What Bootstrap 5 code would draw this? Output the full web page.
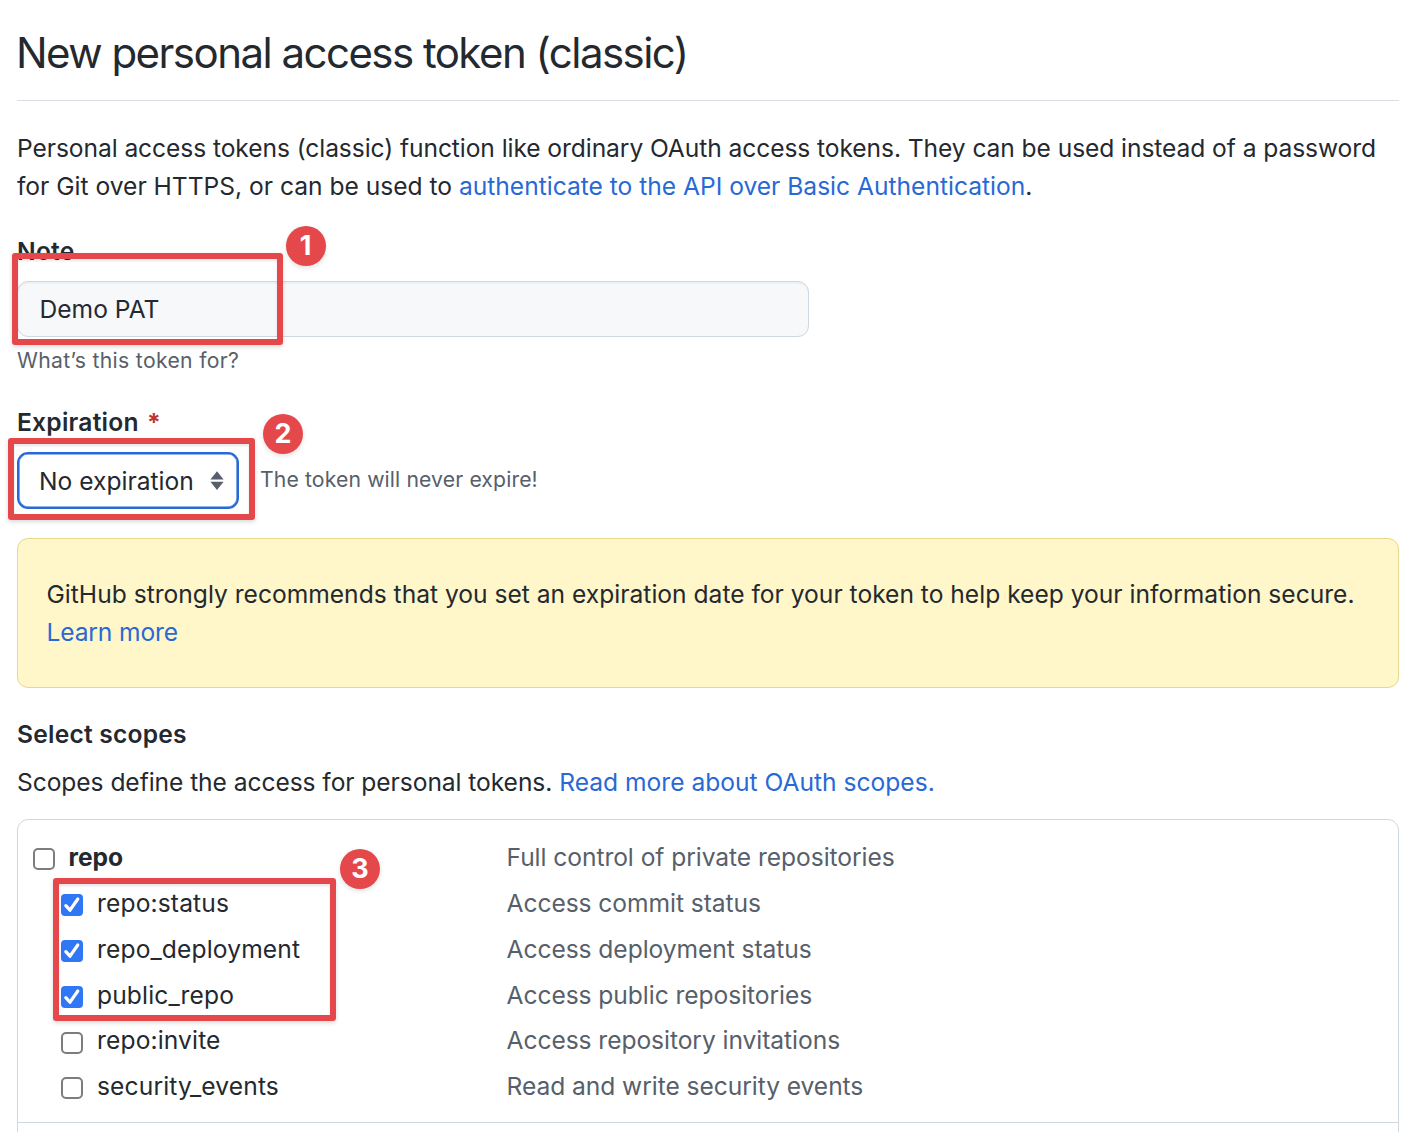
<!DOCTYPE html>
<html lang="en">
<head>
<meta charset="utf-8">
<meta name="viewport" content="width=device-width, initial-scale=1">
<title>New personal access token (classic)</title>
<link href="https://cdn.jsdelivr.net/npm/bootstrap@5.3.0/dist/css/bootstrap.min.css" rel="stylesheet">
<style>
  html, body { height: 1132px; overflow: hidden; }
  body { font-family: Inter, "Liberation Sans", sans-serif; font-size: 24.6px; line-height: 38px; color: #24292f; background: #fff; }
  a { color: #2869d6; text-decoration: none; }
  .page { padding: 21px 17px 0; }
  .page-title { font-size: 42px; line-height: 64px; font-weight: 400; padding-bottom: 15px; border-bottom: 1px solid #d8dee4; margin: 0 0 28px; white-space: nowrap; letter-spacing: -1.53px; text-indent: -1px; }
  .intro { margin-bottom: 27px; white-space: nowrap; }
  .i1 { letter-spacing: -.08px; }
  .i2 { letter-spacing: -.01px; }
  .field-label { font-weight: 600; display: block; letter-spacing: .22px; }
  .note-input { width: 792px; height: 56px; margin-top: 11px; padding: 0 22px 0 21.5px; font-size: inherit; color: #24292f; background: #f6f8fa; border: 1px solid #d0d7de; border-radius: 11px; box-shadow: inset 0 2px 0 rgba(208,215,222,.2); }
  .muted-text { color: #57606a; }
  .hint { font-size: 21.2px; line-height: 32px; }
  .note-hint { margin: 7px 0 27px; letter-spacing: .32px; }
  .expiry-hint { letter-spacing: .12px; margin-bottom: 4px; }
  .required { color: #c0342f; font-weight: 700; margin-left: 2px; }
  .expiry-select { width: 222px; height: 57px; border: 2px solid #2869d6; box-shadow: inset 0 0 0 .6px #2869d6; border-radius: 11px; padding: 0 13px 0 20px; background: #fff; }
  .expiry-row { margin-top: 11px; gap: 21px; }
  .notice { height: 150px; margin: 29px 0 27px; padding: 36px 29px 0 28.5px; border: 1px solid #e8d88b; border-radius: 11px; background: #fff6c9; white-space: nowrap; }
  .n2 { letter-spacing: -.15px; }
  .scopes-text { margin: 10px 0 18px; }
  .s1 { letter-spacing: -.07px; }
  .scope-box { border: 1px solid #d0d7de; border-radius: 11px; height: 360px; }
  .scope-group { padding: 14.5px 15px 0; height: 303px; border-bottom: 1px solid #d0d7de; }
  .scope-row { height: 45.9px; align-items: center; }
  .scope-name { width: 473.5px; gap: 14px; letter-spacing: .13px; }
  .scope-name.fw-bold { letter-spacing: 0; gap: 13.5px; }
  .scope-row.child .scope-name { padding-left: 28px; }
  .scope-row.raised span { margin-top: -2px; }
  .desc { letter-spacing: -.06px; }
  .tick { appearance: none; flex: none; width: 22px; height: 22px; margin: 3px 0 0; border: 2px solid #7d7d7d; border-radius: 5px; background: #fff; }
  .tick-on { background: #3077f6; display: block; margin-top: 3px; flex: none; border-radius: 4px; }
  .mark-frame { position: absolute; border: 6px solid #e5484b; border-radius: 3px; box-shadow: 0 2px 4px rgba(0,0,0,.15), inset 0 2px 3px rgba(0,0,0,.1); pointer-events: none; }
  .mark-dot { position: absolute; width: 40px; height: 40px; border-radius: 50%; background: #e5484b; color: #fff; font-weight: 700; font-size: 27px; line-height: 39px; text-align: center; box-shadow: 0 2px 5px rgba(0,0,0,.12); }
  .frame-1 { left: -5px; top: 21px; width: 271px; height: 92px; }
  .dot-1 { left: 268.5px; top: -6px; }
  .frame-2 { left: -9px; top: 35px; width: 247px; height: 82px; }
  .dot-2 { left: 246px; top: 11px; }
  .frame-3 { left: 35px; top: 58px; width: 283px; height: 143px; }
  .dot-3 { left: 322px; top: 29px; }
</style>
</head>
<body>
<main class="page">
  <h1 class="page-title">New personal access token (classic)</h1>
  <p class="intro"><span class="i1">Personal access tokens (classic) function like ordinary OAuth access tokens. They can be used instead of a password</span><br><span class="i2">for Git over HTTPS, or can be used to <a href="#">authenticate to the API over Basic Authentication</a>.</span></p>

  <section class="position-relative">
    <label class="field-label" for="note">Note</label>
    <input id="note" class="note-input d-block" type="text" value="Demo PAT">
    <p class="hint note-hint muted-text">What’s this token for?</p>
    <div class="mark-frame frame-1"></div>
    <div class="mark-dot dot-1">1</div>
  </section>

  <section class="position-relative">
    <div class="field-label">Expiration <span class="required">*</span></div>
    <div class="expiry-row d-flex align-items-center">
      <div class="expiry-select d-flex align-items-center justify-content-between">
        <span>No expiration</span>
        <svg width="14" height="20" viewBox="0 0 14 20" fill="#57606a"><path d="M7 .3 13.6 8.6H.4zM7 19.1.4 10.8h13.2z"/></svg>
      </div>
      <span class="hint expiry-hint muted-text">The token will never expire!</span>
    </div>
    <div class="mark-frame frame-2"></div>
    <div class="mark-dot dot-2">2</div>
  </section>

  <div class="notice">GitHub strongly recommends that you set an expiration date for your token to help keep your information secure.<br><a class="n2" href="#">Learn more</a></div>

  <div class="field-label">Select scopes</div>
  <p class="scopes-text"><span class="s1">Scopes define the access for personal tokens.</span> <a href="#">Read more about OAuth scopes.</a></p>

  <section class="scope-box position-relative">
    <div class="scope-group">
      <div class="scope-row d-flex"><label class="scope-name d-flex align-items-center fw-bold"><input class="tick" type="checkbox"><span>repo</span></label><span class="desc muted-text">Full control of private repositories</span></div>
      <div class="scope-row child d-flex"><label class="scope-name d-flex align-items-center"><svg class="tick-on" width="22" height="22" viewBox="0 0 22 22"><path d="M4.8 11.6 9 16.2 16.8 5" fill="none" stroke="#fff" stroke-width="3.2" stroke-linecap="round" stroke-linejoin="round"/></svg><span>repo:status</span></label><span class="desc muted-text">Access commit status</span></div>
      <div class="scope-row child d-flex"><label class="scope-name d-flex align-items-center"><svg class="tick-on" width="22" height="22" viewBox="0 0 22 22"><path d="M4.8 11.6 9 16.2 16.8 5" fill="none" stroke="#fff" stroke-width="3.2" stroke-linecap="round" stroke-linejoin="round"/></svg><span>repo_deployment</span></label><span class="desc muted-text">Access deployment status</span></div>
      <div class="scope-row child d-flex"><label class="scope-name d-flex align-items-center"><svg class="tick-on" width="22" height="22" viewBox="0 0 22 22"><path d="M4.8 11.6 9 16.2 16.8 5" fill="none" stroke="#fff" stroke-width="3.2" stroke-linecap="round" stroke-linejoin="round"/></svg><span>public_repo</span></label><span class="desc muted-text">Access public repositories</span></div>
      <div class="scope-row child raised d-flex"><label class="scope-name d-flex align-items-center"><input class="tick" type="checkbox"><span>repo:invite</span></label><span class="desc muted-text">Access repository invitations</span></div>
      <div class="scope-row child raised d-flex"><label class="scope-name d-flex align-items-center"><input class="tick" type="checkbox"><span>security_events</span></label><span class="desc muted-text">Read and write security events</span></div>
    </div>
    <div class="mark-frame frame-3"></div>
    <div class="mark-dot dot-3">3</div>
  </section>
</main>
<script src="https://cdn.jsdelivr.net/npm/bootstrap@5.3.0/dist/js/bootstrap.bundle.min.js"></script>
</body>
</html>
